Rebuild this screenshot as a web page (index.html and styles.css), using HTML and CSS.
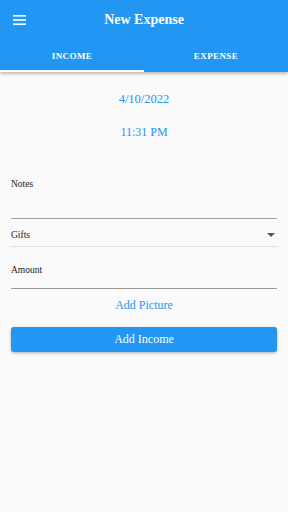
FILE: index.html
```html
<!DOCTYPE html>
<html>
<head>
<meta charset="utf-8">
<link rel="stylesheet" href="styles.css">
</head>
<body>
<header class="appbar">
  <div class="toolbar">
    <svg class="menu" width="13" height="10" viewBox="0 0 13 10"><rect x="0" y="0" width="13" height="1.6" fill="#fff"/><rect x="0" y="4.2" width="13" height="1.6" fill="#fff"/><rect x="0" y="8.4" width="13" height="1.6" fill="#fff"/></svg>
    <div class="title">New Expense</div>
  </div>
  <nav class="tabs">
    <div class="tab active">INCOME</div>
    <div class="tab">EXPENSE</div>
  </nav>
</header>
<main class="content">
  <div class="link date">4/10/2022</div>
  <div class="link time">11:31 PM</div>
  <div class="field notes"><span>Notes</span></div>
  <div class="field select"><span>Gifts</span><svg width="8" height="4" viewBox="0 0 8 4"><path d="M0 0H8L4 4Z" fill="#555"/></svg></div>
  <div class="field amount"><span>Amount</span></div>
  <div class="link picture">Add Picture</div>
  <button class="btn">Add Income</button>
</main>
</body>
</html>
```
FILE: styles.css
```css
* { box-sizing: border-box; }
html, body { margin: 0; padding: 0; }
body {
  width: 288px;
  height: 512px;
  background: #fafafa;
  font-family: "Liberation Serif", "DejaVu Serif", serif;
  color: #333;
}
.appbar {
  background: #2196f3;
  box-shadow: 0 2px 3px rgba(0,0,0,0.25);
  color: #fff;
}
.toolbar {
  height: 39px;
  display: flex;
  align-items: center;
  position: relative;
  padding-left: 13px;
}
.menu { display: block; }
.title {
  flex: 1;
  text-align: center;
  font-weight: bold;
  font-size: 14px;
  margin-right: 26px;
  margin-top: 1px;
}
.tabs {
  display: flex;
  height: 33px;
}
.tab {
  flex: 1;
  display: flex;
  align-items: center;
  justify-content: center;
  font-size: 9px;
  font-weight: bold;
  letter-spacing: 0.4px;
  border-bottom: 2px solid transparent;
  padding-top: 2px;
}
.tab.active { border-bottom-color: #fff; }
.content {
  padding: 0 11px;
  display: flex;
  flex-direction: column;
}
.link {
  color: #2196f3;
  text-align: center;
  font-size: 12px;
}
.date { margin-top: 20px; line-height: 14px; font-size: 12.5px; }
.time { margin-top: 19px; line-height: 14px; }
.field {
  display: flex;
  align-items: center;
  justify-content: space-between;
  font-size: 9.5px;
  color: #222;
}
.notes {
  margin-top: 34px;
  height: 46px;
  align-items: flex-start;
  border-bottom: 1px solid #999;
  padding-top: 6px;
}
.select {
  height: 28px;
  border-bottom: 1px solid #ddd;
  padding-top: 4px;
  padding-right: 2px;
}
.amount {
  height: 42px;
  align-items: flex-start;
  border-bottom: 1px solid #999;
  padding-top: 18px;
}
.picture { margin-top: 9px; line-height: 14px; font-size: 12px; }
.btn {
  margin-top: 15px;
  height: 25px;
  border: none;
  border-radius: 3px;
  background: #2196f3;
  color: #fff;
  font-family: inherit;
  font-size: 12px;
  box-shadow: 0 1px 3px rgba(0,0,0,0.3);
  padding: 0;
}
```
